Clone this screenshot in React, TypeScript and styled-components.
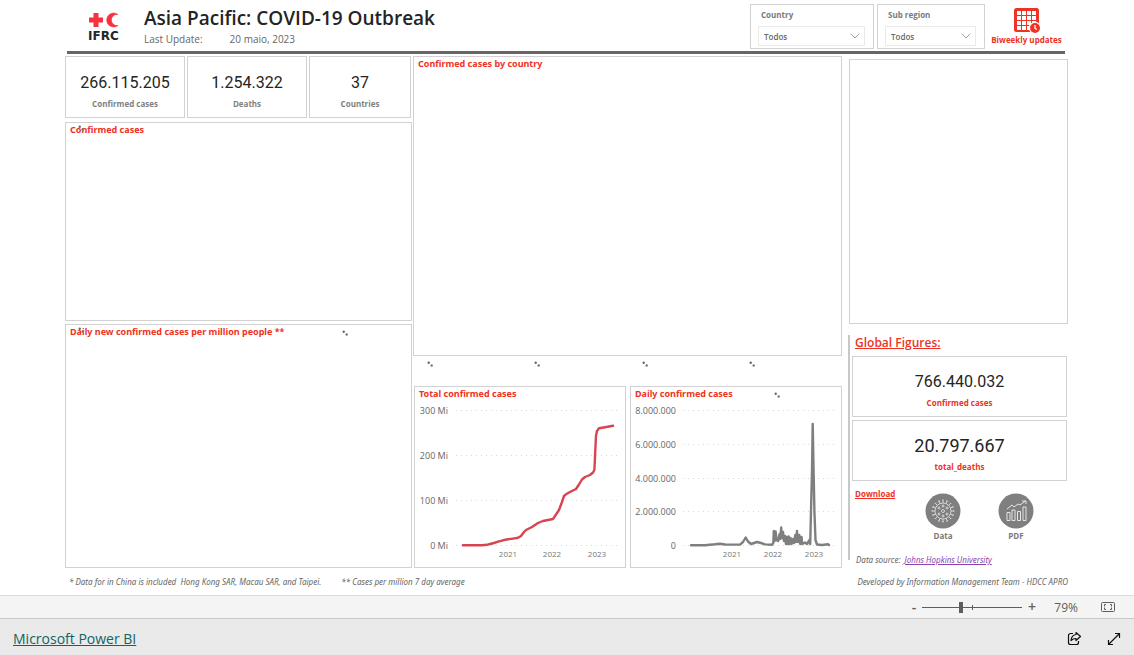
import React from "react";
import styled, { createGlobalStyle } from "styled-components";
import { ChevronDown } from "lucide-react";

const GlobalStyle = createGlobalStyle`
  * { box-sizing: border-box; }
  body { margin: 0; background: #fff; font-family: "Open Sans", "Noto Sans", sans-serif; color: #252423; }
  button, select, input { font-family: inherit; }
  h1, h2, h3, p, dl, dd, dt { margin: 0; }
`;

const RED = "#ee3224";

const Page = styled.div`
  min-height: 100vh;
  display: flex;
  flex-direction: column;
`;

const Report = styled.main`
  flex: 1;
  display: flex;
  flex-direction: column;
  padding: 0 66px 0 65px;
`;

const Header = styled.header`
  display: flex;
  height: 54px;
  margin: 0 3px 2px 2px;
  border-bottom: 3px solid #666;
`;

const Logo = styled.svg`
  width: 34px;
  height: 34px;
  margin: 10px 23px 0 20px;
`;

const Heading = styled.div`
  flex: 1;
  padding-top: 6px;
`;

const Title = styled.h1`
  font-size: 19px;
  line-height: 25px;
  font-weight: 600;
  white-space: nowrap;
`;

const Updated = styled.p`
  display: flex;
  gap: 27px;
  font-size: 10px;
  line-height: 17px;
  color: #666;
`;

const Filter = styled.label<{ $width: number }>`
  display: flex;
  flex-direction: column;
  width: ${(p) => p.$width}px;
  height: 45px;
  margin: 4px 0 0 3px;
  padding: 3px 8px 2px 7px;
  border: 1px solid #d2d2d2;
  font-size: 8px;
  line-height: 14px;
  font-weight: 700;
  color: #7a7a7a;
`;

const FilterName = styled.span`
  padding-left: 3px;
`;

const SelectBox = styled.span`
  display: grid;
  grid-template-columns: 1fr 18px;
  align-items: center;
  height: 20px;
  margin-top: 4px;
  border: 1px solid #eaeaea;
`;

const Select = styled.select`
  grid-area: 1 / 1 / 2 / 3;
  appearance: none;
  width: 100%;
  height: 18px;
  padding: 0 5px;
  border: 0;
  background: transparent;
  color: #666;
  font-size: 8px;
  font-weight: 600;
`;

const Chevron = styled(ChevronDown)`
  grid-area: 1 / 2;
  justify-self: center;
  pointer-events: none;
  color: #8a8a8a;
`;

const Updates = styled.a`
  display: flex;
  flex-direction: column;
  align-items: center;
  width: 77px;
  margin-left: 3px;
  padding-top: 6px;
  color: ${RED};
  font-size: 8px;
  line-height: 12px;
  font-weight: 700;
  white-space: nowrap;
  text-decoration: none;
`;

const Dashboard = styled.div`
  display: grid;
  grid-template-columns: 347fr 429fr 225fr;
  column-gap: 1px;
  flex: 1;
  max-height: 512px;
`;

const Column = styled.div`
  display: flex;
  flex-direction: column;
  min-width: 0;
`;

const Side = styled(Column)`
  padding: 3px 0 0 6px;
`;

const Panel = styled.section<{ $height?: number }>`
  position: relative;
  border: 1px solid #d2d2d2;
  padding-left: 4px;
  ${(p) => (p.$height ? `height: ${p.$height}px;` : "flex: 1;")}
`;

const PanelTitle = styled.h2`
  font-family: "Noto Sans", sans-serif;
  font-size: 9px;
  line-height: 14px;
  font-weight: 700;
  color: ${RED};
  white-space: nowrap;
`;

const Cards = styled.div`
  display: grid;
  grid-template-columns: 120fr 120fr 102fr;
  gap: 2px;
  margin: 0 1px 4px 0;
`;

const Card = styled.dl<{ $global?: boolean; $large?: boolean }>`
  display: flex;
  flex-direction: column-reverse;
  justify-content: flex-start;
  align-items: center;
  flex-shrink: 0;
  height: ${(p) => (p.$global ? 61 : 62)}px;
  padding-bottom: 6px;
  border: 1px solid #d2d2d2;
  dt {
    font-size: 8px;
    line-height: 14px;
    font-weight: 700;
    color: ${(p) => (p.$global ? RED : "#7f7f7f")};
  }
  dd {
    margin-bottom: 3px;
    font-family: Roboto, sans-serif;
    font-size: ${(p) => (p.$large ? 18 : 16)}px;
    line-height: 22px;
  }
`;

const LeftPanels = styled.div`
  flex: 1;
  display: flex;
  flex-direction: column;
  gap: 3px;
`;

const Dots = styled.svg`
  display: block;
  width: 7px;
  height: 7px;
`;

const SpinnerRow = styled.div`
  display: grid;
  grid-template-columns: repeat(4, 1fr);
  height: 30px;
  padding-top: 5px;
  ${Dots} { margin-left: 14px; }
`;

const OverDots = styled(Dots)<{ $left: string; $top: number }>`
  position: absolute;
  left: ${(p) => p.$left};
  top: ${(p) => p.$top}px;
`;

const Charts = styled.div`
  display: grid;
  grid-template-columns: 1fr 1fr;
  gap: 4px;
  padding-left: 1px;
  flex: 1;
`;

const ChartPanel = styled(Panel)`
  padding: 0;
  h2 { padding-left: 4px; }
`;

const Chart = styled.svg`
  display: block;
  width: 100%;
  font-family: "Open Sans", sans-serif;
  fill: #666;
`;

const GlobalFigures = styled.section`
  display: flex;
  flex-direction: column;
  gap: 3px;
  height: 225px;
  margin: 11px 1px 0 -1px;
  padding-left: 2px;
  border-left: 2px solid #c8c8c8;
`;

const GlobalTitle = styled.h2`
  margin-bottom: 3px;
  padding-left: 3px;
  font-size: 12px;
  line-height: 15px;
  font-weight: 600;
  text-decoration: underline;
  color: ${RED};
`;

const Downloads = styled.div`
  display: flex;
  flex-shrink: 0;
  align-items: flex-start;
  padding-left: 3px;
  h3 {
    width: 61px;
    margin-top: 2px;
    font-size: 8px;
    line-height: 16px;
    text-decoration: underline;
    color: ${RED};
  }
`;

const Download = styled.a`
  display: flex;
  flex-direction: column;
  align-items: center;
  width: 54px;
  margin: 9px 19px 0 0;
  font-size: 8px;
  line-height: 14px;
  font-weight: 700;
  color: #7a7a7a;
  text-decoration: none;
`;

const Note = styled.p`
  font-family: "Noto Sans", sans-serif;
  font-size: 8px;
  line-height: 12px;
  font-style: italic;
  color: #666;
  white-space: nowrap;
  a { color: #8e44ad; }
`;

const SourceNote = styled(Note)`
  margin-top: 8px;
  padding-left: 4px;
`;

const Notes = styled.footer`
  display: flex;
  gap: 20px;
  height: 27px;
  padding: 8px 0 0 4px;
  ${Note}:last-child { margin-left: auto; }
`;

const ZoomBar = styled.div`
  display: flex;
  align-items: center;
  justify-content: flex-end;
  height: 24px;
  padding-right: 18px;
  border-top: 1px solid #dcdcdc;
  border-bottom: 1px solid #c8c8c8;
  background: #f4f4f4;
  color: #605e5c;
  output { width: 30px; margin: 0 22px 0 8px; font-size: 12px; text-align: right; }
`;

const IconButton = styled.button`
  display: flex;
  align-items: center;
  justify-content: center;
  min-width: 16px;
  height: 20px;
  padding: 0;
  border: 0;
  background: transparent;
  color: inherit;
  font-size: 14px;
  line-height: 16px;
  font-weight: 600;
`;

const Slider = styled.input`
  appearance: none;
  width: 100px;
  height: 12px;
  margin: 0 2px 0 0;
  background:
    linear-gradient(#605e5c, #605e5c) center / 1px 5px no-repeat,
    linear-gradient(#605e5c, #605e5c) center / 100% 1px no-repeat;
  &::-webkit-slider-thumb {
    appearance: none;
    width: 4px;
    height: 11px;
    background: #605e5c;
  }
`;

const Footer = styled.div`
  display: flex;
  align-items: center;
  height: 36px;
  padding: 4px 12px 0 13px;
  background: #eaeaea;
  color: #111;
`;

const Brand = styled.a`
  font-size: 14px;
  line-height: 20px;
  color: #0f6464;
`;

const FooterIcons = styled.div`
  display: flex;
  gap: 24px;
  margin-left: auto;
`;

const dotShapes = (
  <>
    <circle cx="1.7" cy="1.7" r="1.2" fill="#666" />
    <circle cx="4.7" cy="4.5" r="1.2" fill="#777" />
  </>
);

const Spinner = () => <Dots viewBox="0 0 7 7" aria-hidden="true">{dotShapes}</Dots>;

const OverSpinner = ({ left, top }: { left: string; top: number }) => (
  <OverDots $left={left} $top={top} viewBox="0 0 7 7" aria-hidden="true">{dotShapes}</OverDots>
);

type Tick = { y: number; label: string };

function TrendChart({ ticks, years, labelEnd, gridStart, points, color, title }: {
  ticks: Tick[]; years: number[]; labelEnd: number; gridStart: number; points: string; color: string; title: string;
}) {
  return (
    <Chart viewBox="0 0 210 166" role="img" aria-label={title}>
      {ticks.map((t) => (
        <g key={t.label}>
          <line x1={gridStart} x2="205" y1={t.y} y2={t.y} stroke="#d8d8d8" strokeDasharray="1 4" />
          <text x={labelEnd} y={t.y + 3} fontSize="9" textAnchor="end">{t.label}</text>
        </g>
      ))}
      {years.map((x, i) => (
        <text key={x} x={x} y="156" fontSize="8" fill="#777" textAnchor="middle">{2021 + i}</text>
      ))}
      <polyline points={points} fill="none" stroke={color} strokeWidth="2.4" strokeLinejoin="round" strokeLinecap="round" />
    </Chart>
  );
}

const totalPoints =
  "48,144.3 67,144.2 72,143.8 75,143 79,142 83,140.7 88,139.3 93,138.3 98,137.6 103,136.8 106,135 109,131 111,129 117,126 123,122 128,120 133,119 138,118 141,113.5 144,109 147,101 149,95 151,93.3 155,91 161,88 164,83.5 167,78.5 170,76 175,74 178,71.5 179.4,69 180.5,45 181,35 182,30 184,27.3 190,26.2 198,24.8";

const dailyPoints =
  "60,144.2 74,144.2 84,143.3 89,142.7 94,143.5 109,143.6 112,141 114.7,136.5 117,140.5 120,143 126,141 130,142 134,143.4 141,143.7 142.3,142 142.8,130 143.6,140 144.6,130.5 145.5,139 147,140 148.6,133 149.3,138 150.2,126.5 151,137 152,131 153,140 154,135 155,143 156,136 156.6,143 157.6,135.5 158.4,143 159.6,137 160.6,143 162,138 163,142 164.3,134 165,141 166,130 166.8,141 168.3,134 169.2,143 170.5,136 171.3,143 174,141.5 176,143 178.5,139 179.2,143 180,110 181,70 181.7,23 182.6,70 183.4,110 184.5,139 186,143.5 191,144 197,143.2 198,144";

function MetricCard({ value, label, global, large }: { value: string; label: string; global?: boolean; large?: boolean }) {
  return (
    <Card $global={global} $large={large}>
      <dt>{label}</dt>
      <dd>{value}</dd>
    </Card>
  );
}

function FilterSelect({ name, width }: { name: string; width: number }) {
  return (
    <Filter $width={width}>
      <FilterName>{name}</FilterName>
      <SelectBox>
        <Select><option>Todos</option></Select>
        <Chevron size={16} strokeWidth={1.2} />
      </SelectBox>
    </Filter>
  );
}

const spikes = Array.from({ length: 16 }, (_, i) => i * 22.5);

export default function App() {
  return (
    <Page>
      <GlobalStyle />
      <Report>
        <Header>
          <Logo viewBox="0 0 34 34" role="img" aria-label="IFRC">
            <path d="M6.500 3h5v4.500H16v5h-4.500V17h-5v-4.500H2v-5h4.500z" fill="#f5333f" />
            <path d="M31 4.500A7 7 0 1 0 31 15.500A5.600 5.600 0 1 1 31 4.500Z" fill="#f5333f" stroke="#f5333f" strokeWidth="0.600" />
            <text x="1" y="30" fontFamily="DejaVu Sans, sans-serif" fontSize="12" fontWeight="700" fill="#22262a">IFRC</text>
          </Logo>
          <Heading>
            <Title>Asia Pacific: COVID-19 Outbreak</Title>
            <Updated><span>Last Update:</span><span>20 maio, 2023</span></Updated>
          </Heading>
          <FilterSelect name="Country" width={124} />
          <FilterSelect name="Sub region" width={108} />
          <Updates href="#updates">
            <svg width="28" height="28" viewBox="0 0 28 28" aria-hidden="true">
              <rect x="1" y="2" width="25" height="24" rx="2.500" fill={RED} />
              {[5, 10, 15, 20].map((y) => [4, 9, 14, 19].map((x) => (
                <rect key={`${x}-${y}`} x={x} y={y} width="4" height="4" fill="#fff" />
              )))}
              <circle cx="22" cy="22" r="6.200" fill="#fff" />
              <circle cx="22" cy="22" r="5" fill={RED} />
              <path d="M22 19v3.500l2 1" fill="none" stroke="#fff" strokeWidth="1.200" />
            </svg>
            Biweekly updates
          </Updates>
        </Header>

        <Dashboard>
          <Column>
            <Cards>
              <MetricCard value="266.115.205" label="Confirmed cases" />
              <MetricCard value="1.254.322" label="Deaths" />
              <MetricCard value="37" label="Countries" />
            </Cards>
            <LeftPanels>
              <Panel $height={199}>
                <PanelTitle>Confirmed cases</PanelTitle>
                <OverSpinner left="12px" top={2} />
              </Panel>
              <Panel>
                <PanelTitle>Daily new confirmed cases per million people **</PanelTitle>
                <OverSpinner left="12px" top={2} />
                <OverSpinner left="80%" top={5} />
              </Panel>
            </LeftPanels>
          </Column>

          <Column>
            <Panel $height={300}>
              <PanelTitle>Confirmed cases by country</PanelTitle>
            </Panel>
            <SpinnerRow><Spinner /><Spinner /><Spinner /><Spinner /></SpinnerRow>
            <Charts>
              <ChartPanel>
                <PanelTitle>Total confirmed cases</PanelTitle>
                <TrendChart
                  title="Total confirmed cases"
                  ticks={[{ y: 9.5, label: "300 Mi" }, { y: 54.5, label: "200 Mi" }, { y: 99.5, label: "100 Mi" }, { y: 144.5, label: "0 Mi" }]}
                  years={[93, 137, 182]}
                  labelEnd={33}
                  gridStart={41}
                  points={totalPoints}
                  color="#d64550"
                />
              </ChartPanel>
              <ChartPanel>
                <PanelTitle>Daily confirmed cases</PanelTitle>
                <OverSpinner left="68%" top={5} />
                <TrendChart
                  title="Daily confirmed cases"
                  ticks={[{ y: 9.5, label: "8.000.000" }, { y: 43.5, label: "6.000.000" }, { y: 77.5, label: "4.000.000" }, { y: 110.5, label: "2.000.000" }, { y: 144.5, label: "0" }]}
                  years={[101, 142, 183]}
                  labelEnd={45}
                  gridStart={52}
                  points={dailyPoints}
                  color="#7f7f7f"
                />
              </ChartPanel>
            </Charts>
          </Column>

          <Side>
            <Panel $height={265} aria-label="Map" />
            <GlobalFigures>
              <GlobalTitle>Global Figures:</GlobalTitle>
              <MetricCard global value="766.440.032" label="Confirmed cases" />
              <MetricCard global large value="20.797.667" label="total_deaths" />
              <Downloads>
                <h3>Download</h3>
                <Download href="#data">
                  <svg width="36" height="36" viewBox="0 0 36 36" aria-hidden="true">
                    <circle cx="18" cy="18" r="17.500" fill="#7f7f7f" />
                    <g fill="none" stroke="#e6e6e6" strokeWidth="0.800">
                      <circle cx="18" cy="18" r="8" />
                      {spikes.map((a) => (
                        <path key={a} d="M18 10V7.500M17 7.200h2" transform={`rotate(${a} 18 18)`} />
                      ))}
                      <circle cx="18" cy="18" r="1.500" />
                      <circle cx="14" cy="15" r="1" /><circle cx="22" cy="15" r="1" />
                      <circle cx="14" cy="21" r="1" /><circle cx="22" cy="21" r="1" />
                      <circle cx="18" cy="13" r="1" /><circle cx="18" cy="23" r="1" />
                    </g>
                  </svg>
                  Data
                </Download>
                <Download href="#pdf">
                  <svg width="36" height="36" viewBox="0 0 36 36" aria-hidden="true">
                    <circle cx="18" cy="18" r="17.500" fill="#7f7f7f" />
                    <g fill="none" stroke="#f0f0f0" strokeWidth="0.900">
                      <path d="M9 27.500v-8h3v8zM14 27.500V17h3v10.500zM19.500 27.500v-9h3v9zM25 27.500V14h3v13.500z" />
                      <path d="M9 16l5-4 2 2 4-3 2 1 5.500-4M24 8h4v3" />
                    </g>
                  </svg>
                  PDF
                </Download>
              </Downloads>
              <SourceNote>Data source: <a href="#source">&nbsp;Johns Hopkins University</a></SourceNote>
            </GlobalFigures>
          </Side>
        </Dashboard>

        <Notes>
          <Note>* Data for in China is included&nbsp; Hong Kong SAR, Macau SAR, and Taipei.</Note>
          <Note>** Cases per million 7 day average</Note>
          <Note>Developed by Information Management Team - HDCC APRO</Note>
        </Notes>
      </Report>

      <ZoomBar>
        <IconButton aria-label="Zoom out">-</IconButton>
        <Slider type="range" min="0" max="100" defaultValue="39" aria-label="Zoom" />
        <IconButton aria-label="Zoom in">+</IconButton>
        <output>79%</output>
        <IconButton aria-label="Fit to page">
          <svg width="16" height="12" viewBox="0 0 16 12" fill="none" stroke="#605e5c">
            <rect x="1.500" y="1.500" width="13" height="9" rx="1" />
            <path d="M4.500 5.500v-2H6M10 3.500h1.500v2M11.500 6.500v2H10M6 8.500H4.500v-2" />
          </svg>
        </IconButton>
      </ZoomBar>
      <Footer>
        <Brand href="#powerbi">Microsoft Power BI</Brand>
        <FooterIcons>
          <IconButton aria-label="Share">
            <svg width="16" height="16" viewBox="0 0 16 16" fill="none" stroke="currentColor" strokeWidth="1.200">
              <path d="M7 2.500H4.500a2 2 0 0 0-2 2v7a2 2 0 0 0 2 2h6a2 2 0 0 0 2-2V10" />
              <path d="M10 1.500l4.500 4L10 9.500V7.500C8 7.500 6.500 8 5 9.500C5.300 6 7 4 10 3.500z" strokeLinejoin="round" />
            </svg>
          </IconButton>
          <IconButton aria-label="Full screen">
            <svg width="16" height="16" viewBox="0 0 16 16" fill="none" stroke="currentColor" strokeWidth="1.200">
              <path d="M9 2.500h4.500V7M13.500 2.500l-11 11M2.500 9v4.500H7" />
            </svg>
          </IconButton>
        </FooterIcons>
      </Footer>
    </Page>
  );
}
